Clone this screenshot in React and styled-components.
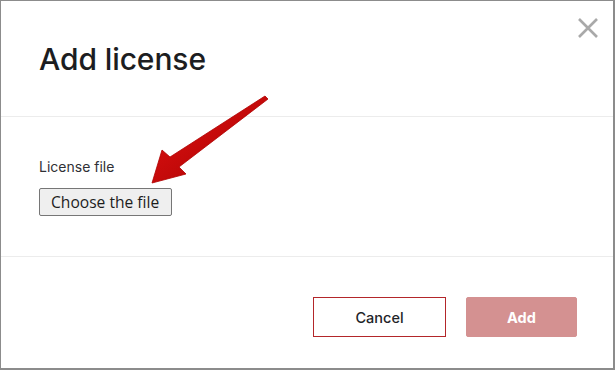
import React from 'react';
import styled, { createGlobalStyle } from 'styled-components';

const Global = createGlobalStyle`
  html, body {
    margin: 0;
    padding: 0;
    background: #ffffff;
  }
  * { box-sizing: border-box; }
`

const Frame = styled.div`
  position: relative;
  width: 615px;
  height: 370px;
  border: 1px solid #8c8c8c;
  border-right-width: 2px;
  border-bottom-width: 2px;
  background: #fff;
  font-family: 'Inter', 'Liberation Sans', sans-serif;
  display: flex;
  flex-direction: column;
`

const Header = styled.header`
  position: relative;
  height: 116px;
  padding-left: 38px;
  display: flex;
  align-items: center;
  border-bottom: 1px solid #ececec;
`

const Title = styled.h1`
  margin: 0;
  font-size: 30px;
  font-weight: 500;
  color: #1c1d21;
  letter-spacing: -0.1px;
`

const Close = styled.button`
  position: absolute;
  top: 16px;
  right: 14px;
  width: 22px;
  height: 22px;
  padding: 0;
  border: none;
  background: none;
  cursor: pointer;
`

const Body = styled.section`
  height: 140px;
  padding: 40px 0 0 38px;
  display: flex;
  flex-direction: column;
  align-items: flex-start;
  border-bottom: 1px solid #ececec;
`

const Label = styled.label`
  font-size: 14px;
  line-height: 20px;
  color: #2f3035;
  margin-bottom: 11px;
`

const FileButton = styled.button`
  height: 28px;
  padding: 0 12px 0 11px;
  font-family: 'Open Sans', 'Noto Sans', sans-serif;
  font-size: 15.6px;
  color: #1d1d1d;
  background: #efefef;
  border: 1px solid #767676;
  border-radius: 2px;
`

const Footer = styled.footer`
  flex: 1;
  display: flex;
  justify-content: flex-end;
  align-items: flex-start;
  gap: 20px;
  padding: 40px 36px 0 0;
`

const Button = styled.button`
  height: 40px;
  width: ${p => p.$w}px;
  font-family: 'Inter', 'Liberation Sans', sans-serif;
  font-size: 14.5px;
  font-weight: ${p => (p.$primary ? 700 : 450)};
  color: ${p => (p.$primary ? '#ffffff' : '#222328')};
  background: ${p => (p.$primary ? '#d49191' : '#ffffff')};
  border: 1px solid ${p => (p.$primary ? '#d49191' : '#b3262a')};
  border-radius: ${p => (p.$primary ? '2px' : '0')};
`

const Arrow = styled.svg`
  position: absolute;
  left: 0;
  top: 0;
  pointer-events: none;
`

export default function App() {
  return (
    <>
      <Global />
      <Frame>
        <Header>
          <Title>Add license</Title>
          <Close aria-label="Close">
            <svg width="22" height="22" viewBox="0 0 22 22">
              <path d="M2 2 L20 20 M20 2 L2 20" stroke="#a9a9a9" strokeWidth="2.6" />
            </svg>
          </Close>
        </Header>
        <Body>
          <Label>License file</Label>
          <FileButton>Choose the file</FileButton>
        </Body>
        <Footer>
          <Button $w={133}>Cancel</Button>
          <Button $w={111} $primary>Add</Button>
        </Footer>
        <Arrow width="615" height="370" viewBox="0 0 615 370">
          <defs>
            <linearGradient id="ag" x1="0" y1="0" x2="1" y2="1">
              <stop offset="0" stopColor="#e41414" />
              <stop offset="1" stopColor="#a60000" />
            </linearGradient>
          </defs>
          <polygon
            points="264,95 267,98 178,166 185,173 151,182 161,149 169,156"
            fill="url(#ag)"
            stroke="#b00000"
            strokeWidth="0.8"
            strokeLinejoin="round"
          />
        </Arrow>
      </Frame>
    </>
  );
}
